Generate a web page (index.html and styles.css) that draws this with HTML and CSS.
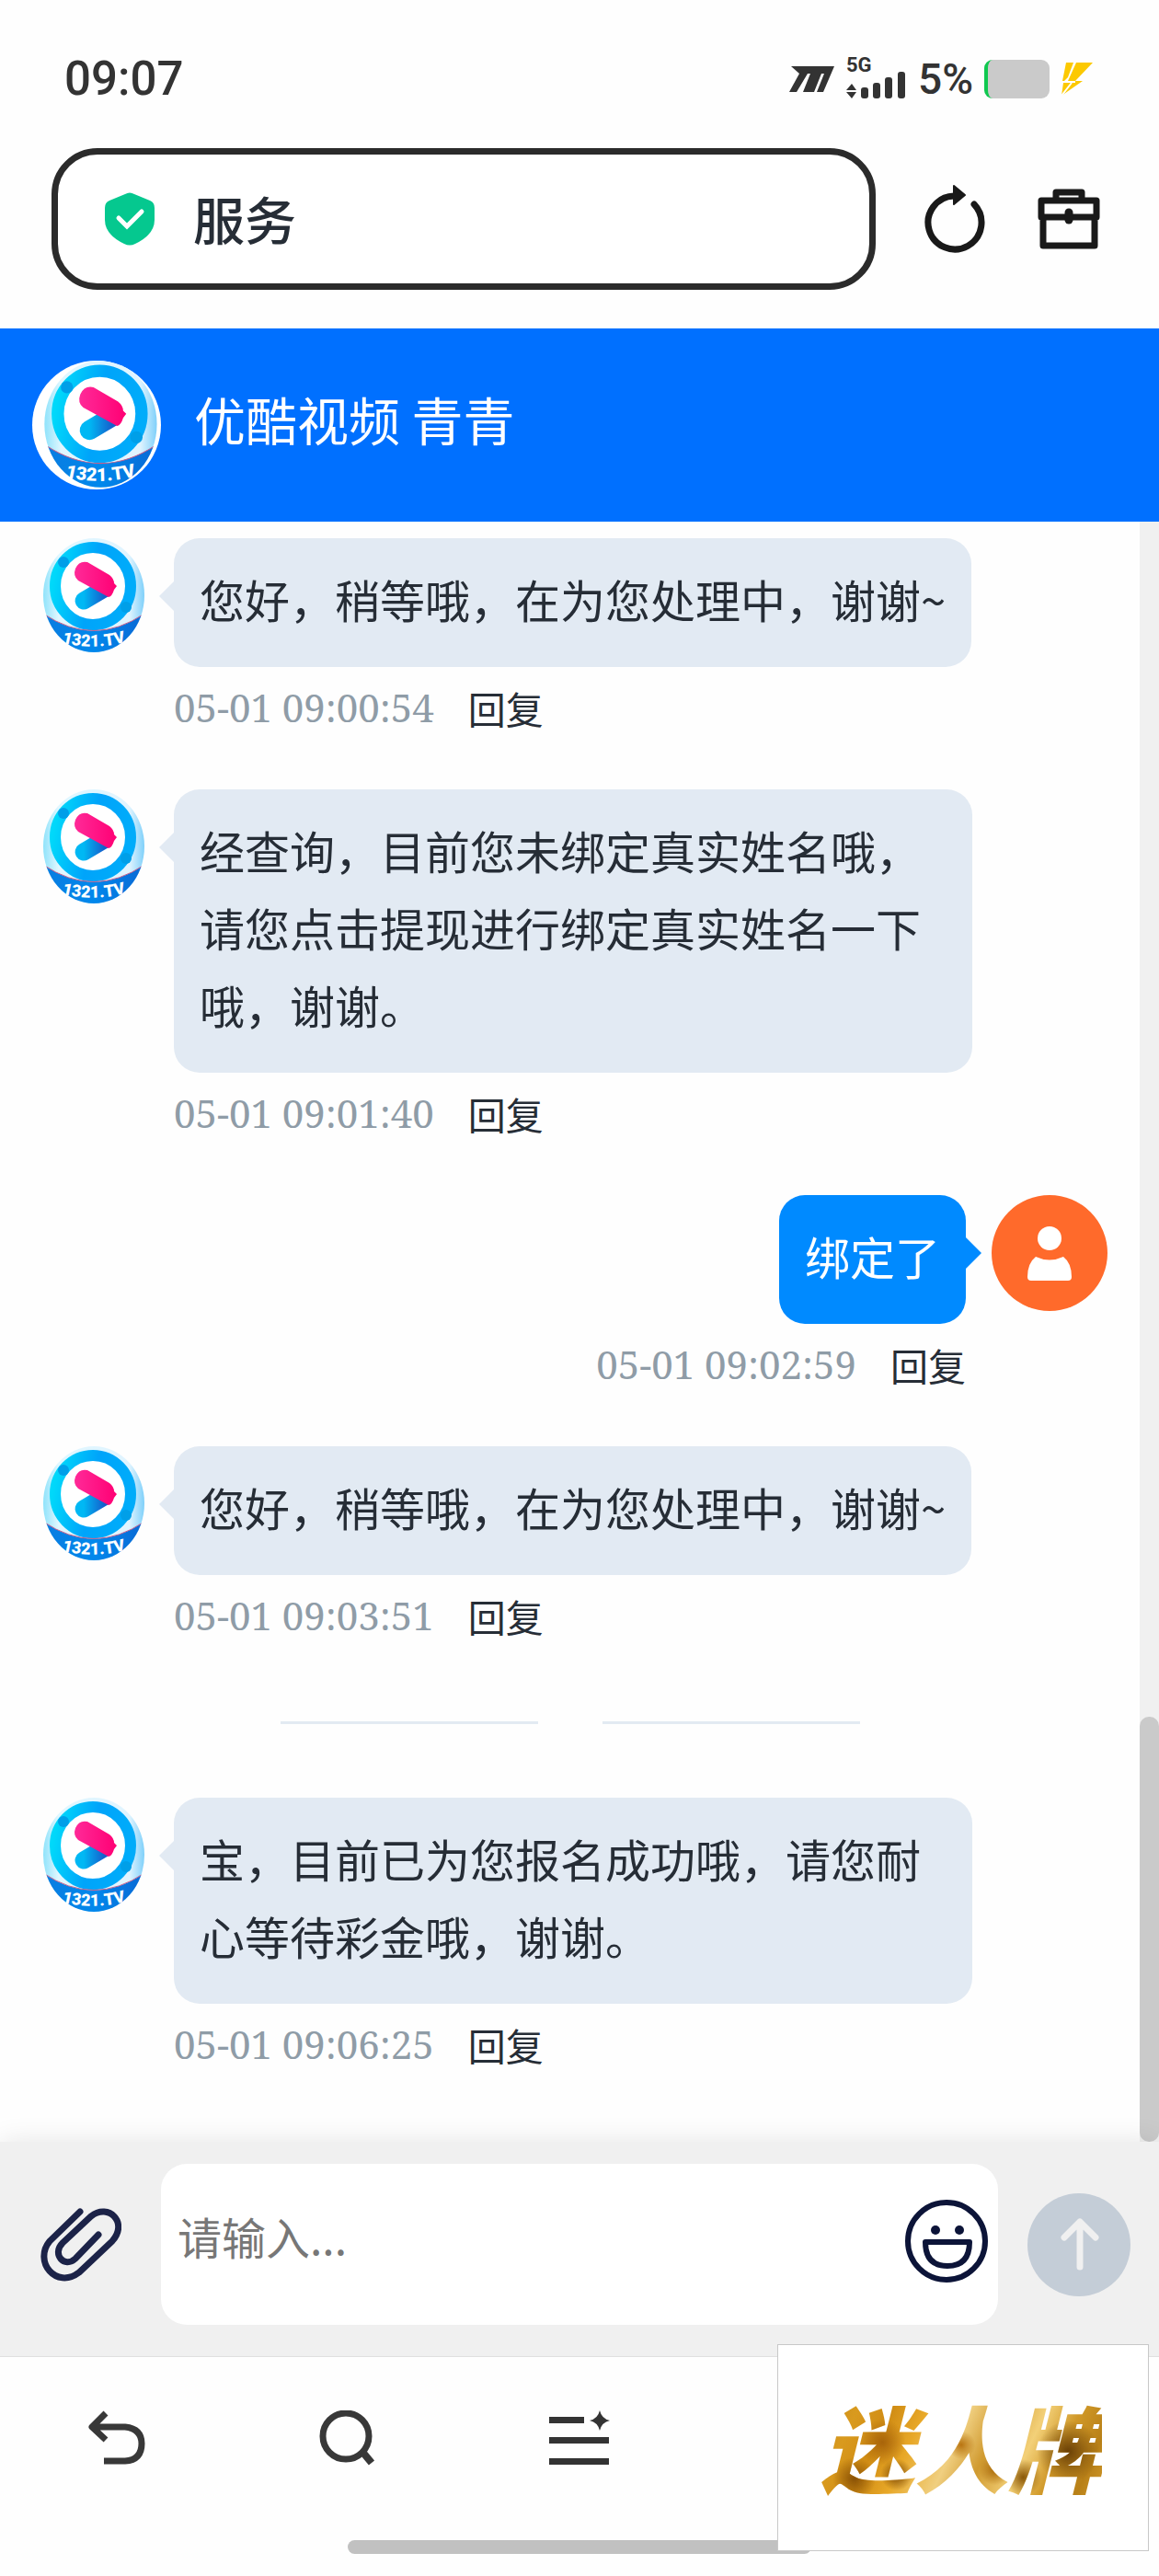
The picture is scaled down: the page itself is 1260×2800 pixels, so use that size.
FILE: index.html
```html
<!DOCTYPE html>
<html lang="zh-CN">
<head>
    <meta charset="UTF-8">
    <meta name="viewport" content="width=device-width, initial-scale=1.0">
    <title>服务</title>
    <link rel="stylesheet" href="styles.css">
</head>
<body>
    <!-- shared logo, used by every agent avatar -->
    <svg class="defs" width="0" height="0" aria-hidden="true">
        <defs>
            <linearGradient id="shell" x1="0" x2="1">
                <stop offset="0" stop-color="#8fe3fb"/>
                <stop offset="0.15" stop-color="#e0f7ff"/>
                <stop offset="0.85" stop-color="#e0f4ff"/>
                <stop offset="1" stop-color="#7fd0fa"/>
            </linearGradient>
            <linearGradient id="ring" x1="0" y1="0.3" x2="1" y2="0.5">
                <stop offset="0" stop-color="#00d8fa"/>
                <stop offset="0.5" stop-color="#00a4fa"/>
                <stop offset="1" stop-color="#00acfa"/>
            </linearGradient>
            <linearGradient id="pink" x1="0" x2="1">
                <stop offset="0" stop-color="#ff2a98"/>
                <stop offset="1" stop-color="#ff0074"/>
            </linearGradient>
            <linearGradient id="pill" x1="0" x2="1">
                <stop offset="0" stop-color="#00b8f4"/>
                <stop offset="1" stop-color="#1560cc"/>
            </linearGradient>
            <linearGradient id="band" x1="0" x2="1">
                <stop offset="0" stop-color="#0a7ce0"/>
                <stop offset="0.5" stop-color="#0088ec"/>
                <stop offset="1" stop-color="#0a68d4"/>
            </linearGradient>
            <clipPath id="egg"><ellipse cx="63" cy="62" rx="55" ry="62"/></clipPath>
            <path id="arc" d="M22 112Q63 124 104 111"/>
            <g id="logo">
                <ellipse cx="63" cy="62" rx="55" ry="62" fill="url(#shell)"/>
                <ellipse cx="62" cy="52" rx="41" ry="42" fill="#fff" stroke="url(#ring)" stroke-width="12"/>
                <circle cx="30" cy="26" r="6" fill="#009fe8"/>
                <circle cx="98" cy="75" r="6" fill="#009fe8"/>
                <path d="M52 68L74 55" stroke="url(#pill)" stroke-width="19" stroke-linecap="round"/>
                <path d="M56 26L80 40Q85 44 85 49L88 52L85 56Q83 63 79 64L46 46Q40 41 43 33Q47 24 56 26Z" fill="url(#pink)"/>
                <g clip-path="url(#egg)">
                    <path d="M8 82Q63 119 118 82V126H8Z" fill="url(#band)"/>
                    <path d="M8 82Q63 119 118 82" fill="none" stroke="#c8608c" stroke-width="1"/>
                </g>
                <text class="logo-text"><textPath href="#arc" startOffset="50%" text-anchor="middle">1321.TV</textPath></text>
            </g>
        </defs>
    </svg>

    <div class="status-bar">
        <span class="clock">09:07</span>
        <div class="status-icons">
            <svg width="50" height="28" viewBox="0 0 50 28"><path d="M2 0H49L37 28H30L38 8H35L27 28H15L23 8H20L8 28H0L11 8Z" fill="#333"/></svg>
            <div class="signal">
                <span class="net">5G</span>
                <svg width="66" height="30" viewBox="0 0 66 30" fill="#333"><path d="M0 21L6 14L11 21ZM0 23L6 30L11 23Z"/><rect x="16" y="18" width="8" height="12" rx="3"/><rect x="29" y="13" width="8" height="17" rx="3"/><rect x="42" y="7" width="8" height="23" rx="3"/><rect x="56" y="1" width="8" height="29" rx="3"/></svg>
            </div>
            <span class="percent">5%</span>
            <div class="battery"></div>
            <svg width="36" height="36" viewBox="0 0 36 36" fill="#fcc900"><path d="M6 0H14L8 16L4 20H2ZM17 0H35L16 20H24L1 36L3 22L8 20Z"/><path d="M2 21L16 21M1 36L12 22" stroke="#fff" stroke-width="2"/></svg>
        </div>
    </div>

    <div class="address-row">
        <div class="address">
            <svg width="54" height="58" viewBox="0 0 54 58"><path d="M22 2Q27 -1 32 2L49 9Q54 11 54 17V30Q54 46 33 56Q27 59 21 56Q0 46 0 30V17Q0 11 5 9Z" fill="#05c88f"/><path d="M15 28L24 37L40 21" fill="none" stroke="#fff" stroke-width="5" stroke-linecap="round"/></svg>
            <span>服务</span>
        </div>
        <button class="icon-btn reload" aria-label="刷新">
            <svg width="68" height="76" viewBox="0 0 68 76"><path d="M34 13A29 29 0 1 0 56 22" fill="none" stroke="#191919" stroke-width="7" stroke-linecap="round"/><path d="M34 2L46 12L34 22Z" fill="#191919" stroke="#191919" stroke-width="2" stroke-linejoin="round"/></svg>
        </button>
        <button class="icon-btn" aria-label="工具箱">
            <svg width="68" height="66" viewBox="0 0 68 66" fill="none" stroke="#191919" stroke-width="7" stroke-linejoin="round"><path d="M20 13V4H48V13M4 13H64V31H4ZM6 31V62H62V31"/><path d="M34 26V34" stroke-width="9" stroke-linecap="round"/></svg>
        </button>
    </div>

    <header class="chat-header">
        <svg class="header-avatar" viewBox="-4 0 126 126"><use href="#logo"/></svg>
        <h1>优酷视频 青青</h1>
    </header>

    <main class="chat">
        <div class="messages">
            <div class="message">
                <svg class="avatar" viewBox="0 0 126 126"><use href="#logo"/></svg>
                <div class="content">
                    <p class="bubble">您好，稍等哦，在为您处理中，谢谢~</p>
                    <div class="meta"><time>05-01 09:00:54</time><a href="#">回复</a></div>
                </div>
            </div>
            <div class="message">
                <svg class="avatar" viewBox="0 0 126 126"><use href="#logo"/></svg>
                <div class="content">
                    <p class="bubble">经查询，目前您未绑定真实姓名哦，请您点击提现进行绑定真实姓名一下哦，谢谢。</p>
                    <div class="meta"><time>05-01 09:01:40</time><a href="#">回复</a></div>
                </div>
            </div>
            <div class="message mine">
                <svg class="avatar" viewBox="0 0 126 126"><circle cx="63" cy="63" r="63" fill="#ff6a2b"/><circle cx="63" cy="47" r="13" fill="#fff"/><path d="M48 67Q63 74 78 67Q87 74 87 89Q87 93 83 93H43Q39 93 39 89Q39 74 48 67Z" fill="#fff"/></svg>
                <div class="content">
                    <p class="bubble">绑定了</p>
                    <div class="meta"><time>05-01 09:02:59</time><a href="#">回复</a></div>
                </div>
            </div>
            <div class="message">
                <svg class="avatar" viewBox="0 0 126 126"><use href="#logo"/></svg>
                <div class="content">
                    <p class="bubble">您好，稍等哦，在为您处理中，谢谢~</p>
                    <div class="meta"><time>05-01 09:03:51</time><a href="#">回复</a></div>
                </div>
            </div>
            <div class="divider"><span></span><span></span></div>
            <div class="message">
                <svg class="avatar" viewBox="0 0 126 126"><use href="#logo"/></svg>
                <div class="content">
                    <p class="bubble">宝，目前已为您报名成功哦，请您耐心等待彩金哦，谢谢。</p>
                    <div class="meta"><time>05-01 09:06:25</time><a href="#">回复</a></div>
                </div>
            </div>
        </div>
        <div class="scrollbar"><div class="thumb"></div></div>
    </main>

    <form class="composer">
        <button type="button" class="icon-btn" aria-label="附件">
            <svg width="88" height="80" viewBox="0 0 88 80" fill="none" stroke="#1c2348" stroke-width="7" stroke-linecap="round"><path d="M43 4L10 36C-8 58 17 89 42 70L78 36C96 16 74 -6 55 9L24 38C12 50 26 66 38 55L63 29"/></svg>
        </button>
        <div class="field">
            <input type="text" placeholder="请输入..." aria-label="消息">
            <button type="button" class="icon-btn" aria-label="表情">
                <svg width="90" height="90" viewBox="0 0 90 90" fill="none" stroke="#0c1438" stroke-width="6"><circle cx="45" cy="45" r="42"/><path d="M22 46H70Q70 72 46 72Q22 72 22 46Z" stroke-linejoin="round"/><circle cx="33" cy="33" r="5" fill="#0c1438" stroke="none"/><circle cx="59" cy="33" r="5" fill="#0c1438" stroke="none"/></svg>
            </button>
        </div>
        <button type="submit" class="icon-btn" aria-label="发送">
            <svg width="112" height="112" viewBox="0 0 112 112" fill="none" stroke="#f0f0f0" stroke-width="7" stroke-linecap="round" stroke-linejoin="round"><circle cx="56" cy="56" r="56" fill="#c4cdd7" stroke="none"/><path d="M57 80V31M40 48L57 31L74 48"/></svg>
        </button>
    </form>

    <nav class="bottom-nav">
        <button class="icon-btn" aria-label="返回"><svg width="64" height="60" viewBox="0 0 64 60" fill="none" stroke="#383838" stroke-width="7"><path d="M6 18H42Q60 20 60 36Q60 54 42 55H19M21 3L6 18L21 32" stroke-linejoin="round"/></svg></button>
        <button class="icon-btn" aria-label="搜索"><svg width="64" height="60" viewBox="0 0 64 60" fill="none" stroke="#383838" stroke-width="7"><circle cx="30" cy="28" r="25"/><path d="M48 45L58 57" stroke-width="8"/></svg></button>
        <button class="icon-btn" aria-label="菜单"><svg width="66" height="60" viewBox="0 0 66 60" fill="#333"><path d="M0 7H38V14H0ZM0 29H65V36H0ZM0 52H65V59H0Z"/><path d="M55 0Q57 9 66 11Q57 13 55 22Q53 13 44 11Q53 9 55 0Z"/></svg></button>
        <div class="home-bar"></div>
    </nav>

    <aside class="promo"><strong>迷人牌</strong></aside>
</body>
</html>
```
FILE: styles.css
```css
* {
    box-sizing: border-box;
}
body {
    margin: 0;
    min-height: 100vh;
    display: flex;
    flex-direction: column;
    position: relative;
    background: #fefefe;
    color: #262d36;
    font-family: "Noto Sans CJK SC", sans-serif;
}
svg {
    display: block;
    flex: none;
}
.defs {
    position: absolute;
}
.logo-text {
    fill: #fff;
    font-family: Roboto, sans-serif;
    font-size: 18px;
    font-weight: 900;
}
.icon-btn {
    padding: 0;
    border: none;
    background: none;
    cursor: pointer;
}

/* phone status bar */
.status-bar {
    display: flex;
    justify-content: space-between;
    align-items: center;
    height: 161px;
    padding: 10px 71px 0 70px;
    color: #333;
    font-family: Roboto, sans-serif;
}
.clock {
    font-size: 51px;
    font-weight: 500;
}
.status-icons {
    display: flex;
    align-items: center;
    gap: 12px;
}
.signal {
    width: 66px;
}
.net {
    display: block;
    font-size: 22px;
    line-height: 12px;
    font-weight: bold;
}
.percent {
    font-size: 46px;
    font-weight: 500;
}
.battery {
    width: 71px;
    height: 42px;
    border-left: 4px solid #10c850;
    border-radius: 9px;
    background: #cacaca;
}

/* browser address row */
.address-row {
    display: flex;
    align-items: center;
    gap: 51px;
    padding: 0 64px 42px 56px;
}
.reload {
    margin-right: 6px;
}
.address {
    flex: 1;
    display: flex;
    align-items: center;
    gap: 42px;
    height: 154px;
    padding: 0 51px;
    border: 7px solid #2b2b2b;
    border-radius: 50px;
    font-size: 56px;
    font-weight: 500;
    background: #fff;
}
.address span {
    padding-bottom: 4px;
}

.chat-header {
    display: flex;
    align-items: center;
    gap: 36px;
    height: 210px;
    padding: 0 35px;
    background: #0070ff;
    color: #fff;
}
.header-avatar {
    width: 140px;
    height: 140px;
    border-radius: 50%;
    background: #fff;
}
.chat-header h1 {
    margin: 0;
    padding-bottom: 16px;
    font-size: 56px;
    font-weight: normal;
}

/* messages */
.chat {
    flex: 1;
    display: flex;
}
.messages {
    flex: 1;
    padding: 18px 35px 0 39px;
}
.message {
    display: flex;
    gap: 24px;
}
.avatar {
    width: 126px;
    height: 126px;
}
.content {
    display: flex;
    flex-direction: column;
    align-items: flex-start;
    max-width: 868px;
}
.bubble {
    position: relative;
    margin: 0;
    padding: 24px 28px 32px;
    border-radius: 28px;
    background: #e2eaf3;
    font-size: 49px;
    line-height: 84px;
}
.bubble::before {
    content: "";
    position: absolute;
    top: 46px;
    left: -16px;
    border: 17px solid transparent;
    border-left: none;
    border-right-color: #e2eaf3;
}
.meta {
    display: flex;
    align-items: center;
    gap: 37px;
    height: 133px;
    padding-bottom: 46px;
}
.meta time {
    color: #8f9ca7;
    font-family: "Noto Serif", "Liberation Serif", serif;
    font-size: 42px;
}
.meta a {
    color: #262d36;
    font-size: 41px;
    text-decoration: none;
}
.mine {
    flex-direction: row-reverse;
    gap: 28px;
}
.mine .content {
    align-items: flex-end;
}
.mine .bubble {
    background: #008aff;
    color: #fff;
}
.mine .bubble::before {
    left: auto;
    right: -17px;
    border-left: 17px solid #008aff;
    border-right: none;
}
.divider {
    display: flex;
    justify-content: center;
    gap: 70px;
    padding: 26px 4px 80px 0;
}
.divider span {
    width: 280px;
    height: 3px;
    background: #e2eaf2;
}
.scrollbar {
    display: flex;
    align-items: flex-end;
    width: 21px;
    background: #f0f0f0;
}
.thumb {
    width: 21px;
    height: 462px;
    border-radius: 10px;
    background: #cacaca;
}

/* input row */
.composer {
    display: flex;
    align-items: center;
    height: 234px;
    padding: 0 31px 10px 44px;
    border-bottom: 1px solid #e0e0e0;
    background: #f0f0f0;
    box-shadow: 0 0 28px rgba(0, 0, 0, 0.1);
}
.field {
    flex: 1;
    display: flex;
    align-items: center;
    height: 175px;
    margin: 0 32px 0 43px;
    padding: 0 11px 8px 16px;
    border-radius: 28px;
    background: #fff;
}
.field input {
    flex: 1;
    min-width: 0;
    padding: 0 0 12px 2px;
    border: none;
    outline: none;
    background: none;
    font-family: inherit;
    font-size: 48px;
}
.field input::placeholder {
    color: #777;
}

.bottom-nav {
    position: relative;
    display: grid;
    grid-template-columns: repeat(5, 1fr);
    justify-items: center;
    align-items: start;
    height: 238px;
    padding-top: 58px;
    background: #fefefe;
}
.home-bar {
    position: absolute;
    left: 30%;
    bottom: 24px;
    width: 40%;
    height: 15px;
    border-radius: 8px;
    background: #c1c1c1;
}

/* gold banner over the corner of the nav */
.promo {
    position: absolute;
    right: 11px;
    bottom: 27px;
    display: flex;
    align-items: center;
    justify-content: center;
    width: 404px;
    height: 225px;
    padding: 0 4px 6px 0;
    border: 1px solid #c8c8c8;
    background: #fff;
}
.promo strong {
    background:
        radial-gradient(circle at 22% 48%, #a8640a 0, transparent 10%),
        radial-gradient(circle at 12% 75%, #8a5206 0, transparent 8%),
        radial-gradient(circle at 27% 72%, #7a4604 0, transparent 7%),
        radial-gradient(circle at 50% 50%, #b87410 0, transparent 9%),
        radial-gradient(circle at 62% 68%, #a86808 0, transparent 8%),
        radial-gradient(circle at 88% 55%, #6a4006 0, transparent 12%),
        radial-gradient(circle at 72% 74%, #8a5808 0, transparent 8%),
        linear-gradient(115deg, #c08618, #d99a1e 15%, #d08c14 25%, #e8a828 35%, #f0cf80 48%, #d09a30 58%, #f3d078 70%, #d09828 80%, #b88018 90%, #d8a030);
    -webkit-background-clip: text;
    background-clip: text;
    color: transparent;
    font-size: 102px;
    font-style: italic;
    font-weight: 900;
}
```
